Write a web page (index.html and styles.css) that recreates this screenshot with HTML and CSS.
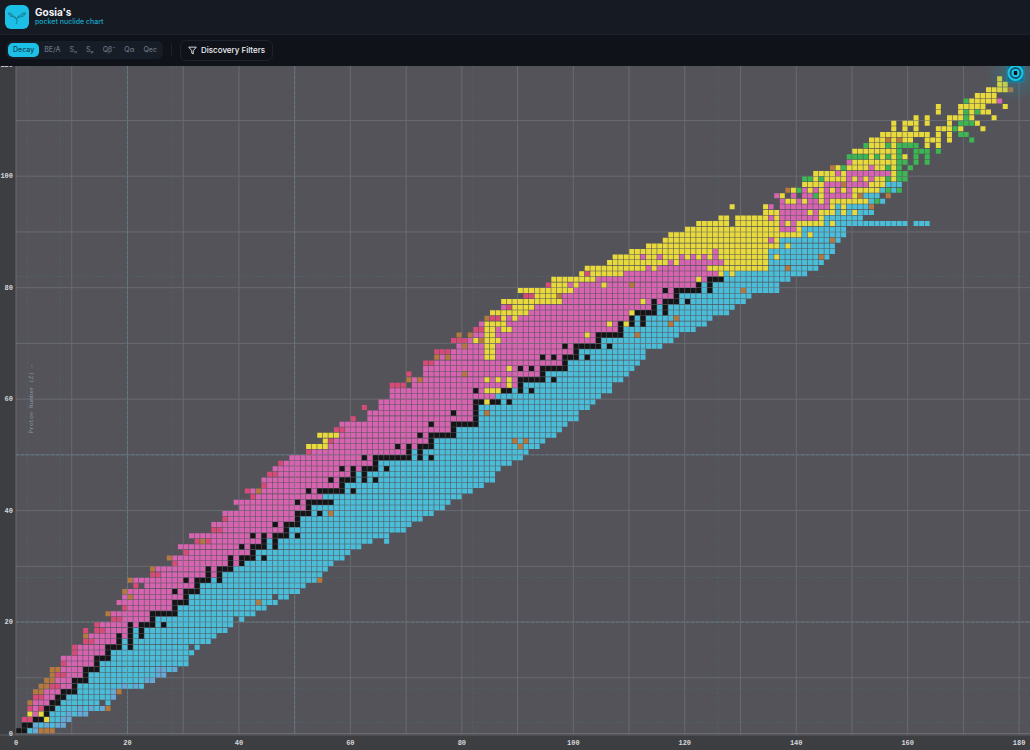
FILE: index.html
```html
<!DOCTYPE html>
<html lang="en">
<head>
<meta charset="utf-8">
<meta name="viewport" content="width=device-width, initial-scale=1">
<title>Gosia's pocket nuclide chart</title>
<link rel="stylesheet" href="styles.css">
</head>
<body>
<header class="header">
  <svg class="logo" viewBox="0 0 24 24" aria-hidden="true">
    <rect class="logo-tile" width="24" height="24" rx="6"/>
    <path class="logo-mark" d="M11 19c1.500-1.500 1-3.500.5-5C9.500 13.500 9 11.500 7 11.500S3.500 9.500 3.500 8c2 0 3 .5 4 2s2.500 1 4 4c1.500-3 2.500-2.500 4-4s3-2.500 5-2c0 1.500-1.500 3-3.500 3.500S13 12 11.500 14"/>
  </svg>
  <div class="brand">
    <h1 class="title">Gosia's</h1>
    <p class="subtitle">pocket nuclide chart</p>
  </div>
</header>
<nav class="toolbar" aria-label="Chart options">
  <div class="tabs">
    <button class="tab tab-active" type="button">Decay</button>
    <button class="tab" type="button">BE/A</button>
    <button class="tab" type="button">Sₙ</button>
    <button class="tab" type="button">Sₚ</button>
    <button class="tab" type="button">Qβ⁻</button>
    <button class="tab" type="button">Qα</button>
    <button class="tab" type="button">Qec</button>
  </div>
  <span class="divider"></span>
  <button class="filters" type="button">
    <svg class="funnel" viewBox="0 0 24 24" aria-hidden="true"><path d="M2 3h20l-8 9.500V21l-4-2v-6.500z"/></svg>
    Discovery Filters
  </button>
</nav>
<main class="stage">
  <svg class="chart" id="chart" viewBox="0 0 1030 684" role="img" aria-label="Nuclide chart coloured by decay mode">
    <defs>
      <radialGradient id="glow">
        <stop class="glow-in" offset="0"/>
        <stop class="glow-out" offset="1"/>
      </radialGradient>
    </defs>
  </svg>
</main>
<script src="chart.js"></script>
</body>
</html>
```
FILE: styles.css
```css
* {
  box-sizing: border-box;
}

body {
  margin: 0;
  height: 100vh;
  display: flex;
  flex-direction: column;
  overflow: hidden;
  background: #3d3e42;
  color: #f2f4f7;
  font-family: Inter, "Open Sans", sans-serif;
}

.header {
  display: flex;
  align-items: center;
  gap: 6px;
  height: 35px;
  flex: none;
  padding: 0 5px 1px;
  background: #161a23;
  border-bottom: 1px solid #1d212b;
}

.logo {
  width: 24px;
  height: 24px;
}

.logo-tile {
  fill: #1cc0e6;
}

.logo-mark {
  fill: #1ba6c4;
  stroke: #197f98;
  stroke-width: 1;
  stroke-linejoin: round;
}

.title {
  margin: 0;
  font-size: 10px;
  line-height: 11px;
  font-weight: 700;
}

.subtitle {
  margin: 0;
  font-size: 7px;
  line-height: 8px;
  font-weight: 500;
  color: #17a9c8;
}

.toolbar {
  display: flex;
  align-items: center;
  height: 31px;
  flex: none;
  padding: 0 6px 1px;
  background: #0f1218;
}

.tabs {
  display: flex;
  gap: 1px;
  height: 18px;
  padding: 2px;
  border-radius: 6px;
  background: #171d27;
}

.tab {
  border: 0;
  border-radius: 5px;
  padding: 0 4px;
  background: none;
  color: #697381;
  font: 500 7px/14px Inter, "DejaVu Sans", sans-serif;
}

.tab-active {
  padding: 0 5px;
  background: #1cc0e6;
  color: #0d4656;
}

.divider {
  width: 1px;
  height: 14px;
  margin: 0 8px;
  background: #1c222c;
}

.filters {
  display: flex;
  align-items: center;
  gap: 4px;
  height: 21px;
  padding: 0 7px;
  border: 1px solid #1d232e;
  border-radius: 6px;
  background: #0f1218;
  color: #eef1f5;
  font: 500 8px/14px Inter, sans-serif;
}

.funnel {
  width: 9px;
  height: 9px;
  fill: none;
  stroke: #dfe3e8;
  stroke-width: 2.5;
  stroke-linejoin: round;
}

.stage {
  flex: 1;
  min-height: 0;
}

.chart {
  display: block;
  width: 100%;
  height: 100%;
}

.plot { fill: #535359; }
.grid { stroke: #6a6b71; stroke-width: 1; }
.magic { stroke: #4e727c; stroke-width: 1; stroke-dasharray: 3 2; opacity: .4; }
.magic-major { stroke: #5d8490; opacity: .7; }
.frame { stroke: #5b5c61; stroke-width: 1; }
.k { fill: #151517; }
.c { fill: #4bbdd8; }
.b { fill: #67a9d6; }
.m { fill: #d664b0; }
.r { fill: #d84b78; }
.o { fill: #b5793f; }
.y { fill: #e8da3c; }
.g { fill: #3cb553; }

.tick {
  fill: #d6d8db;
  font: 700 7px "Liberation Mono", monospace;
}

.tick-x { text-anchor: middle; }
.tick-y { text-anchor: end; }

.axis-name {
  fill: #94969d;
  font: 400 6px "Liberation Mono", "DejaVu Sans Mono", monospace;
  text-anchor: middle;
}

.glow-in { stop-color: #1595b5; stop-opacity: .4; }
.glow-out { stop-color: #1595b5; stop-opacity: 0; }
.target-box { fill: #14708a; stroke: #1787a5; stroke-width: 1; }
.target-ring { fill: #145c70; stroke: #1cc5ea; stroke-width: 2; }
.target-core { fill: #0c1216; }
```
FILE: chart.js
```js
// One entry per element from Z = 1: first neutron number, then runs of
// decay colour with the last neutron number of each run. "." is a gap.
const rows = `
0 k1 c2 b3 o6
1 k2 b3 c4 b5 c6 b8
1 r2 k4 y5 c6 c7 b9
2 y2 m3 y4 k5 c8 b9 c10 b12
2 r2 m3 r4 k6 c10 b11 c12 b13 c14 b15 o16
2 o2 m5 k7 c14 .15 c16
3 r4 m6 k8 c16 b17
3 o4 m7 k10 c16 b17 o18
4 o5 r7 m9 k10 c18 b19 c20 b21 c22
5 o6 m9 k12 c22 b24
6 o6 r8 m11 k12 c24 b26
6 o7 m11 k14 c24 b26 c27 b28
8 r8 m13 k14 c30
8 m13 k16 c30
10 r10 m15 k16 c31
10 r10 m15 k18 c19 k20 c30 .31 c32
12 r13 m17 k18 c19 k20 c34
12 o12 m17 k18 m19 k20 c21 k22 c35
12 r12 .13 r15 m19 k20 c21 k22 c37
14 r14 m19 k20 m21 k24 c25 k26 c38
17 r18 m23 k24 c38 .39 c40
16 o16 m23 k28 c42
19 r19 m27 k28 c44
18 m27 k30 c42 o43 c46
19 m19 o20 m29 k30 c45 .46 c48
19 o19 m27 k28 m29 k32 c50
21 r21 .22 m31 k32 c51
20 o20 m29 k30 m31 k34 c35 k36 c53 o54
24 r25 m33 k34 m35 k36 c54
24 o24 m33 k34 m35 k38 c55
28 r28 m37 k38 m39 k40 c56
27 o27 m37 k38 m39 k42 c43 k44 c58
30 r30 m41 k42 c59
29 m39 k40 m41 k44 c45 k46 c61
32 r32 o33 r34 m43 k44 c45 k46 c63 .65 c66
31 m41 k42 m43 k44 m45 k48 c49 k50 c66
35 r36 m47 k48 c69
35 m45 k46 m47 k50 c70
37 r37 m49 k50 c72
37 m49 k52 c53 k54 c55 o56 c74
40 m51 k52 c76
39 m49 k50 m51 k56 c77
42 r42 m54 c79
41 r41 m42 o43 m51 k52 m53 k58 c59 k60 c81
44 r44 m57 k58 c83
44 m55 k56 m57 k60 c61 k62 c63 k64 c85
45 r46 m59 k60 c61 k62 c85
46 m57 k58 m59 k60 m61 k64 c65 k66 c86
47 r47 m63 k64 c88
49 m61 k62 m63 k70 c71 k72 c73 k74 c90
52 r52 m69 k70 c71 k72 c91
52 y55 m67 k68 m69 k70 m71 k74 c89 o90 c93
55 y55 r56 m73 k74 c88 o89 c90 o91 c94
54 y57 m71 k72 m73 k78 c96
57 r58 m77 k78 c97
58 m73 k74 m77 k82 c98
60 r60 .62 m81 k82 c100
63 m77 k78 m81 k82 c83 o84 c100
62 r62 .64 m81 k82 c102
65 m81 k83 y84 k86 c87 k88 c103
67 m85 c104
67 m81 k82 m83 y86 k88 c89 k90 c91 k92 c106
67 r69 .70 m87 y88 m89 k90 c106
70 o70 m71 o72 m83 y84 m85 y86 m87 y88 m89 k94 c95 k96 c108
70 r70 .72 m79 o80 m93 k94 c109
73 m87 y88 m89 k90 m91 k92 m93 k98 c110
73 r74 m97 k98 c111
75 o75 m76 o77 m83 y85 m93 k94 m95 k96 m97 k100 c101 k102 c112
75 r77 m83 y85 m99 k100 c112
79 m79 o80 m83 y85 m97 k98 m99 k104 c105 k106 c115
78 r80 m81 y82 o83 y86 m103 k104 c117
79 o79 .80 o81 m83 y85 m101 y102 m103 k108 c110 o111 c118
82 r83 y85 m86 y88 m107 k108 c121
83 m83 y87 m105 y106 m107 k108 y109 k110 c111 k112 c116 o117 c123
84 o84 r86 y87 m88 y89 m109 k110 c111 k112 c117 o118 c124
85 y91 m109 y110 k114 c115 k116 c127
87 m87 r88 y92 m113 k114 c115 k116 c128
87 y97 m111 y112 m113 k114 m115 k118 c119 k120 c130
91 r92 y96 o97 m117 k118 c131
90 y99 m115 k116 m117 k122 c123 k124 c129 o130 c136
95 r95 y98 m99 y100 m104 y105 m109 o110 m121 k122 c123 k124 c136
96 y103 m121 y122 m123 k126 c138
101 y101 r102 y108 m125 y126 c127 y128 c141
102 y112 m113 y114 m123 y134 c137 o138 c143
106 y116 m117 y118 m126 y134 c144
107 y111 m112 y114 m115 y118 m119 y120 m121 y122 m123 y124 m125 y134 c135 y136 c143 o144 c145
110 y124 m125 y134 c146
113 y136 c137 y138 c146
116 y134 m135 y136 c145 o146 c147
117 y140 c141 y142 c148
120 y136 m139 y140 c148
122 y127 .128 y136 m137 y138 m139 y144 c145 y146 c159 .160 c163
126 y127 .128 y134 m135 y136 m143 y144 c151
134 y136 m141 y142 m143 y146 c147 y148 c149 y150 c153
128 y128 .133 y134 m135 .136 m145 y146 c147 y148 c152 o153
137 m137 y139 m140 y141 m143 y144 m145 y152 c153 g154 c155
136 m136 y137 .138 m139 .140 m142 g143 y144 m149 y150 o151 c154 .155 o156
138 o138 y139 g140 m141 y142 m143 y144 m145 y146 m147 y148 m149 y154 c155 g156 c157 g158
141 y144 m147 o148 m152 y155 c158
141 g142 y143 g144 y148 m149 y150 m151 y152 m153 y155 g156 y157 g159
143 y146 m147 y148 m156 y157 g159
146 o146 y147 g148 y152 m153 y155 g156 y157 g158 .159 g160
149 m149 y157 g159 .160 g161 .162 g163
149 g152 y153 g154 y155 g156 y157 g158 y159 .160 g161 .162 g163
150 y157 g158 .160 g163 .164 g165
152 g152 y155 g156 y157 g161 .162 y163 .164 y165
153 y155 o156 y157 o158 y160 .162 y165 .166 y167 .170 g171
155 y163 .164 y165 .166 y167 .168 g170
157 y157 .158 y159 .160 y161 .164 y167 g168 y169 .172 y173
157 y157 .158 y161 .162 y163 .166 y167 .168 g171 y172
161 y161 .162 y163 .166 y169 g170 y171 .174 y175
165 y165 .168 y169 g170 y171 g172 y174
165 y165 .168 y173 .176 y177
170 g170 y175 m176
172 y175
174 y177 o178
176 y177
176 y176
`.trim().split("\n");

const NS = "http://www.w3.org/2000/svg";
const svg = document.getElementById("chart");
const left = 16, base = 667.5, unit = 5.573, cell = 5;
const px = n => left + n * unit;
const py = z => base - z * unit;

function add(tag, attrs, text) {
  const el = document.createElementNS(NS, tag);
  for (const key in attrs) el.setAttribute(key, attrs[key]);
  if (text !== undefined) el.textContent = text;
  svg.appendChild(el);
  return el;
}

// Plot background and grid
add("rect", { class: "plot", x: left, y: 0, width: 1014, height: 669 });
for (let n = 0; n <= 180; n += 10) {
  add("line", { class: "grid", x1: px(n), x2: px(n), y1: 0, y2: 669 });
}
for (let z = 0; z < 120; z += 10) {
  add("line", { class: "grid", x1: left, x2: 1030, y1: py(z), y2: py(z) });
}
for (const k of [2, 8, 20, 28, 50, 82, 126]) {
  const kind = k % 10 === 0 ? "magic magic-major" : "magic";
  add("line", { class: kind, x1: px(k), x2: px(k), y1: 0, y2: 669 });
  if (k < 120) add("line", { class: kind, x1: left, x2: 1030, y1: py(k), y2: py(k) });
}
add("line", { class: "frame", x1: 0, x2: 1030, y1: 669, y2: 669 });

// Cells, gathered in one path for each colour
const paths = {};
rows.forEach((row, i) => {
  const [start, ...runs] = row.split(" ");
  let n = Number(start);
  for (const run of runs) {
    const kind = run[0];
    for (const last = Number(run.slice(1)); n <= last; n++) {
      if (kind === ".") continue;
      const x = (px(n) + 0.3).toFixed(2), y = (py(i + 1) + 0.3).toFixed(2);
      paths[kind] = (paths[kind] || "") + `M${x} ${y}h${cell}v${cell}h-${cell}z`;
    }
  }
});
for (const kind in paths) add("path", { class: kind, d: paths[kind] });

// Axis labels
for (let n = 0; n <= 180; n += 20) {
  add("text", { class: "tick tick-x", x: px(n), y: 679 }, n);
}
for (let z = 0; z <= 120; z += 20) {
  add("text", { class: "tick tick-y", x: 13, y: py(z) + 2 }, z);
}
add("text", { class: "axis-name", transform: "translate(33 333) rotate(-90)" }, "Proton Number (Z) →");

// Highlighted nuclide
add("circle", { cx: 1015, cy: 7, r: 28, fill: "url(#glow)" });
add("rect", { class: "target-box", x: 1007, y: -1, width: 17, height: 17, rx: 1 });
add("circle", { class: "target-ring", cx: 1015.5, cy: 7, r: 7 });
add("circle", { class: "target-ring", cx: 1015.5, cy: 7, r: 3 });
add("rect", { class: "target-core", x: 1014, y: 5, width: 3, height: 4 });
```
